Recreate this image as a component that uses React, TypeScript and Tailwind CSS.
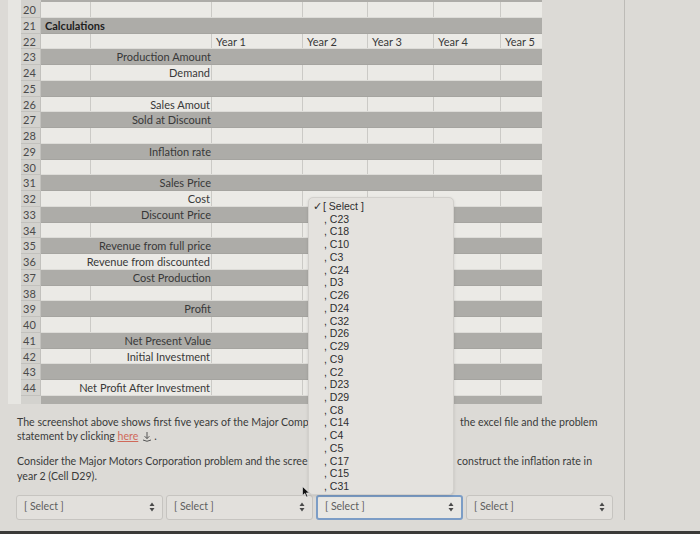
import React from 'react'

type Row = { n: number; label?: string; bold?: string; years?: boolean }

const rows: Row[] = [
  { n: 20 },
  { n: 21, bold: 'Calculations' },
  { n: 22, years: true },
  { n: 23, label: 'Production Amount' },
  { n: 24, label: 'Demand' },
  { n: 25 },
  { n: 26, label: 'Sales Amout' },
  { n: 27, label: 'Sold at Discount' },
  { n: 28 },
  { n: 29, label: 'Inflation rate' },
  { n: 30 },
  { n: 31, label: 'Sales Price' },
  { n: 32, label: 'Cost' },
  { n: 33, label: 'Discount Price' },
  { n: 34 },
  { n: 35, label: 'Revenue from full price' },
  { n: 36, label: 'Revenue from discounted' },
  { n: 37, label: 'Cost Production' },
  { n: 38 },
  { n: 39, label: 'Profit' },
  { n: 40 },
  { n: 41, label: 'Net Present Value' },
  { n: 42, label: 'Initial Investment' },
  { n: 43 },
  { n: 44, label: 'Net Profit After Investment' },
]

const options = [
  'C23', 'C18', 'C10', 'C3', 'C24', 'D3', 'C26', 'D24', 'C32', 'D26', 'C29',
  'C9', 'C2', 'D23', 'D29', 'C8', 'C14', 'C4', 'C5', 'C17', 'C15', 'C31',
]

const yearCols = [
  { w: 'w-[91px]', t: 'Year 1' },
  { w: 'w-[65px]', t: 'Year 2' },
  { w: 'w-[66px]', t: 'Year 3' },
  { w: 'w-[67px]', t: 'Year 4' },
  { w: 'w-[41px]', t: 'Year 5' },
]

function SheetRow({ row }: { row: Row }) {
  const light = row.n % 2 === 0
  const bg = light ? 'bg-[#ebeae6]' : 'bg-[#adaca8]'
  const line = light ? 'border-r border-[#cbcac6]' : ''
  return (
    <div className="flex h-[15.75px] text-[11px] leading-[15.75px] text-[#383838]">
      <div className="w-[20px] shrink-0 bg-[#d3d2ce] border-r border-b border-[#c2c1bd] pl-[2px] text-[#4a4a4a]">
        {row.n}
      </div>
      <div className={`flex ${bg} border-b ${light ? 'border-[#dddcd8]' : 'border-[#a5a4a0]'}`}>
        <div className={`w-[50px] shrink-0 ${line} relative`}>
          {row.bold && (
            <span className="absolute left-[4px] top-0 font-bold text-[#1e1e1e] whitespace-nowrap">{row.bold}</span>
          )}
        </div>
        <div className={`w-[121px] shrink-0 ${line} flex justify-end pr-[1px]`}>
          {row.label && (
            <span className={`whitespace-nowrap relative z-10 ${bg}`}>{row.label}</span>
          )}
        </div>
        {yearCols.map((c, i) => (
          <div
            key={c.t}
            className={`${c.w} shrink-0 ${i < yearCols.length - 1 ? line : ''} pl-[4px] whitespace-nowrap`}
          >
            {row.years ? c.t : ''}
          </div>
        ))}
      </div>
    </div>
  )
}

function Arrows() {
  return (
    <svg width="6" height="10" viewBox="0 0 6 10" className="shrink-0">
      <path d="M3 0.5 L5.5 4 H0.5 Z" fill="#4a4a4a" />
      <path d="M3 9.5 L5.5 6 H0.5 Z" fill="#4a4a4a" />
    </svg>
  )
}

function SelectBox({ focused }: { focused?: boolean }) {
  return (
    <div
      className={`w-[147px] h-[25px] rounded-[3px] flex items-center justify-between pl-[7px] pr-[7px] text-[10.5px] text-[#5e5e5e] ${
        focused ? 'border-2 border-[#7c9dc6] bg-[#e8e7e3]' : 'border border-[#c6c4c0] bg-[#e2e0dc]'
      }`}
    >
      <span>[ Select ]</span>
      <Arrows />
    </div>
  )
}

export default function App() {
  return (
    <div
      className="relative w-[700px] h-[534px] overflow-hidden bg-[#dcdad6]"
      style={{ fontFamily: 'Lato, "Open Sans", sans-serif' }}
    >
      <div className="flex">
        <div className="w-[625px] shrink-0 border-r border-[#bdbbb7]">
          {/* spreadsheet screenshot */}
          <div className="flex">
            <div className="w-[8px] shrink-0" />
            <div className="w-[13px] shrink-0 bg-[#e7e6e2]" />
            <div>
              <div className="h-[2px] flex">
                <div className="w-[20px] bg-[#d3d2ce]" />
                <div className="w-[501px] bg-[#adaca8]" />
              </div>
              {rows.map((r) => (
                <SheetRow key={r.n} row={r} />
              ))}
              <div className="h-[8px] flex">
                <div className="w-[20px] bg-[#d3d2ce]" />
                <div className="w-[501px] bg-[#adaca8]" />
              </div>
            </div>
          </div>

          {/* question text */}
          <div className="pl-[17px] pt-[11px] text-[10.6px] leading-[14.5px] text-[#3a3a3a]">
            <div className="flex">
              <span className="w-[443px] shrink-0 whitespace-nowrap">
                The screenshot above shows first five years of the Major Comp
              </span>
              <span className="whitespace-nowrap">the excel file and the problem</span>
            </div>
            <div className="flex items-center">
              <span>statement by clicking&nbsp;</span>
              <span className="text-[#d0695a] underline">here</span>
              <svg width="10" height="11" viewBox="0 0 10 11" className="ml-[4px]">
                <path d="M5 1 V7.5 M2.6 5.2 L5 7.6 L7.4 5.2" stroke="#555" strokeWidth="1" fill="none" />
                <path d="M1 9 Q5 11.5 9 9" stroke="#555" strokeWidth="1" fill="none" />
              </svg>
              <span className="ml-[2px]">.</span>
            </div>
            <div className="flex mt-[10px] leading-[15px]">
              <span className="w-[440px] shrink-0 whitespace-nowrap">
                Consider the Major Motors Corporation problem and the scree
              </span>
              <span className="whitespace-nowrap">construct the inflation rate in</span>
            </div>
            <div className="leading-[15px]">year 2 (Cell D29).</div>
          </div>

          <div className="flex items-center gap-[3px] pl-[16px] mt-[11px]">
            <SelectBox />
            <SelectBox />
            <SelectBox focused />
            <SelectBox />
          </div>
        </div>
      </div>

      {/* open dropdown list */}
      <div
        className="absolute left-[308px] top-[197px] w-[146px] h-[298px] rounded-[5px] bg-[#e4e2de] border border-[#d2d0cc] shadow-[0_1px_3px_rgba(0,0,0,0.12)] pt-[2px] text-[10.5px] leading-[12.73px] text-[#2e2e2e]"
        style={{ fontFamily: '"Liberation Sans", Arial, sans-serif' }}
      >
        <div className="flex pl-[4px]">
          <span className="w-[10px]">✓</span>
          <span>[ Select ]</span>
        </div>
        {options.map((o) => (
          <div key={o} className="pl-[15px] whitespace-nowrap">
            , {o}
          </div>
        ))}
      </div>

      {/* mouse pointer */}
      <svg width="8" height="12" viewBox="0 0 8 12" className="absolute left-[302px] top-[486px]">
        <path d="M0.5 0.5 L0.5 9.5 L2.8 7.4 L4.4 11 L5.8 10.4 L4.3 6.9 L7.3 6.9 Z" fill="#111" stroke="#eee" strokeWidth="0.6" />
      </svg>

      <div className="absolute left-0 right-0 bottom-0 h-[3px] bg-[#3b3a38]" />
    </div>
  )
}
